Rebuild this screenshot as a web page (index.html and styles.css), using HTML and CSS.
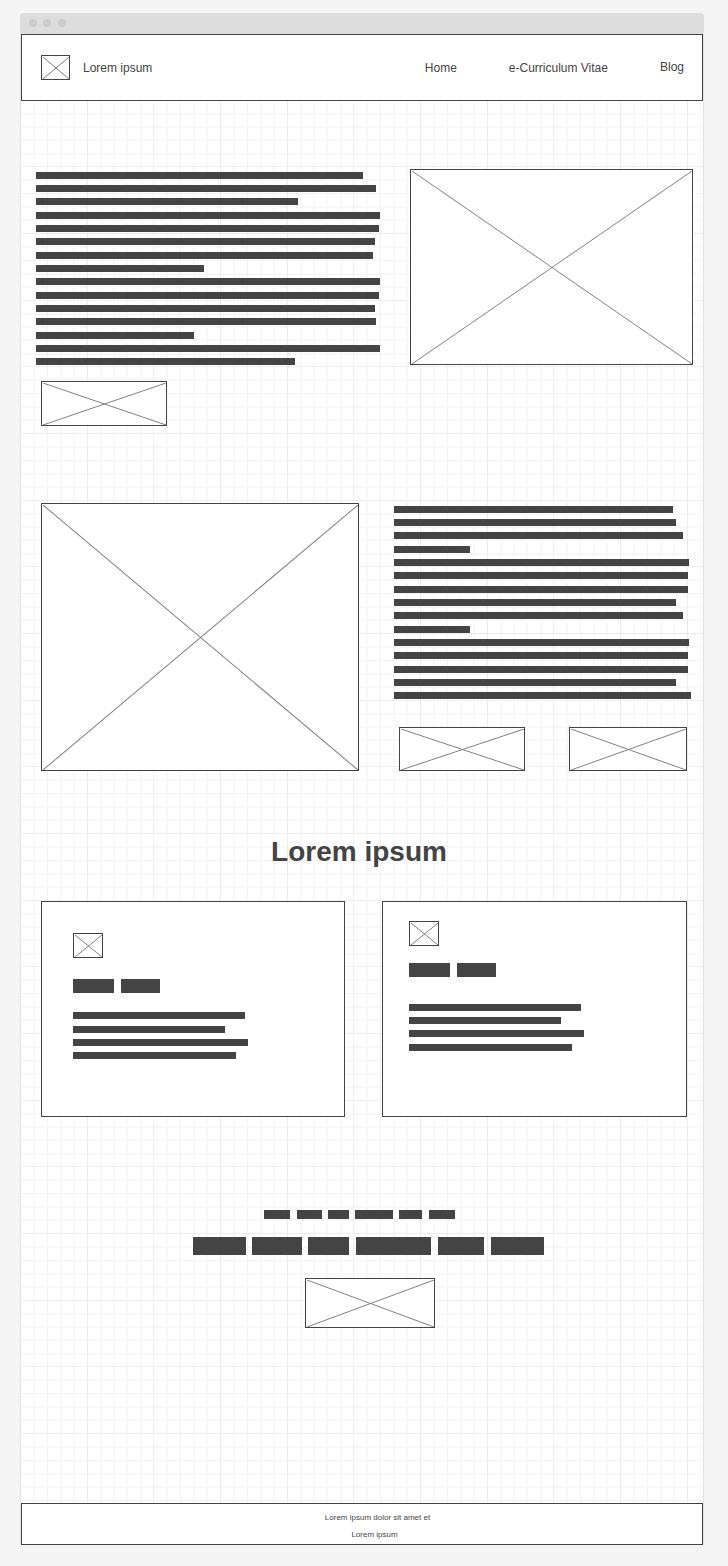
FILE: index.html
```html
<!DOCTYPE html>
<html lang="en">
<head>
<meta charset="utf-8">
<meta name="viewport" content="width=device-width, initial-scale=1">
<title>Lorem ipsum</title>
<link rel="stylesheet" href="styles.css">
</head>
<body>
<svg class="defs" aria-hidden="true">
  <symbol id="cross" viewBox="0 0 100 100" preserveAspectRatio="none">
    <path d="M0 0L100 100M100 0L0 100" vector-effect="non-scaling-stroke"/>
  </symbol>
</svg>
<div class="window">
  <div class="titlebar"><span class="dot"></span><span class="dot"></span><span class="dot"></span></div>
  <div class="page">
    <header class="header">
      <span class="box logo"><svg class="cross"><use href="#cross"/></svg></span>
      <span class="brand">Lorem ipsum</span>
      <nav class="nav">
        <a href="#">Home</a>
        <a href="#">e-Curriculum Vitae</a>
        <a href="#" class="raised">Blog</a>
      </nav>
    </header>
    <main class="main">
      <section class="intro">
        <div class="copy">
          <div class="lines">
            <div style="width:327px"></div><div style="width:340px"></div><div style="width:262px"></div>
            <div style="width:344px"></div><div style="width:343px"></div><div style="width:339px"></div>
            <div style="width:337px"></div><div style="width:168px"></div><div style="width:344px"></div>
            <div style="width:343px"></div><div style="width:339px"></div><div style="width:340px"></div>
            <div style="width:158px"></div><div style="width:344px"></div><div style="width:259px"></div>
          </div>
          <button type="button" class="box intro-button" aria-label="Action"><svg class="cross"><use href="#cross"/></svg></button>
        </div>
        <div class="box intro-image"><svg class="cross"><use href="#cross"/></svg></div>
      </section>
      <section class="about">
        <div class="box about-image"><svg class="cross"><use href="#cross"/></svg></div>
        <div class="copy">
          <div class="lines">
            <div style="width:279px"></div><div style="width:282px"></div><div style="width:289px"></div>
            <div style="width:76px"></div><div style="width:295px"></div><div style="width:294px"></div>
            <div style="width:294px"></div><div style="width:282px"></div><div style="width:289px"></div>
            <div style="width:76px"></div><div style="width:295px"></div><div style="width:294px"></div>
            <div style="width:294px"></div><div style="width:282px"></div><div style="width:297px"></div>
          </div>
          <div class="actions">
            <button type="button" class="box" aria-label="Action"><svg class="cross"><use href="#cross"/></svg></button>
            <button type="button" class="box" aria-label="Action"><svg class="cross"><use href="#cross"/></svg></button>
          </div>
        </div>
      </section>
      <h1 class="title">Lorem ipsum</h1>
      <section class="cards">
        <article class="card">
          <div class="box card-icon"><svg class="cross"><use href="#cross"/></svg></div>
          <div class="card-title"><span style="width:41px"></span><span style="width:39px"></span></div>
          <div class="lines">
            <div style="width:172px"></div><div class="loose" style="width:152px"></div><div style="width:175px"></div><div class="tight" style="width:163px"></div>
          </div>
        </article>
        <article class="card card-compact">
          <div class="box card-icon"><svg class="cross"><use href="#cross"/></svg></div>
          <div class="card-title"><span style="width:41px"></span><span style="width:39px"></span></div>
          <div class="lines">
            <div style="width:172px"></div><div style="width:152px"></div><div style="width:175px"></div><div style="width:163px"></div>
          </div>
        </article>
      </section>
      <section class="contact">
        <div class="words words-small">
          <span style="width:26px"></span><span class="apart" style="width:25px"></span><span style="width:21px"></span><span style="width:38px"></span><span style="width:23px"></span><span class="apart" style="width:26px"></span>
        </div>
        <div class="words words-large">
          <span style="width:53px"></span><span style="width:50px"></span><span style="width:41px"></span><span class="apart" style="width:75px"></span><span class="apart" style="width:46px"></span><span class="apart" style="width:53px"></span>
        </div>
        <div class="contact-action">
          <button type="button" class="box contact-button" aria-label="Action"><svg class="cross"><use href="#cross"/></svg></button>
        </div>
      </section>
    </main>
    <footer class="footer">
      <p>Lorem ipsum dolor sit amet et</p>
      <p class="footer-name">Lorem ipsum</p>
    </footer>
  </div>
</div>
</body>
</html>
```
FILE: styles.css
```css
* { box-sizing: border-box; }

body {
  margin: 0;
  padding: 13px 24px 21px 20px;
  background: #f4f4f4;
  color: #444;
  font: 12px/16px "Liberation Sans", Arial, sans-serif;
}

.defs { display: none; }

/* Window frame */
.titlebar {
  display: flex;
  align-items: center;
  gap: 6px;
  height: 21px;
  padding: 0 9px 1px;
  border-radius: 4px 4px 0 0;
  background: #ddd;
}
.dot { width: 8px; height: 8px; border-radius: 50%; background: #cbcbcb; }
.dot:last-child { margin-left: 1px; }

.page {
  border: solid #e2e2e2;
  border-width: 0 1px;
  background: #fff;
}

/* Graph paper: a 200px tile holding three major squares of five cells */
.main {
  background-color: #fff;
  background-position: -1px -68px;
  background-image: url("data:image/svg+xml,%3Csvg xmlns='http://www.w3.org/2000/svg' width='200' height='200' shape-rendering='crispEdges'%3E%3Cpath fill='%23f8f8f8' d='M13 0h2v200h-2zM40 0h2v200h-2zM53 0h2v200h-2zM80 0h2v200h-2zM93 0h2v200h-2zM106 0h2v200h-2zM120 0h2v200h-2zM146 0h2v200h-2zM173 0h2v200h-2zM186 0h2v200h-2zM0 13h200v2h-200zM0 40h200v2h-200zM0 53h200v2h-200zM0 80h200v2h-200zM0 93h200v2h-200zM0 106h200v2h-200zM0 120h200v2h-200zM0 146h200v2h-200zM0 173h200v2h-200zM0 186h200v2h-200z'/%3E%3Cpath fill='%23f2f2f2' d='M27 0h1v200h-1zM160 0h1v200h-1zM0 27h200v1h-200zM0 160h200v1h-200z'/%3E%3Cpath fill='%23efefef' d='M133 0h1v200h-1zM0 67h200v1h-200zM0 133h200v1h-200z'/%3E%3Cpath fill='%23ebebeb' d='M0 0h1v200h-1zM67 0h1v200h-1zM0 0h200v1h-200z'/%3E%3C/svg%3E");
}

/* Crossed placeholder boxes */
.box {
  display: block;
  padding: 1px 0 0 1px;
  border: 1px solid #444;
  border-radius: 0;
  background: #fff;
}
.cross {
  display: block;
  width: 100%;
  height: 100%;
  fill: none;
  stroke: #808080;
  stroke-width: 1px;
}

/* Header */
.header {
  display: flex;
  align-items: center;
  min-height: 67px;
  padding: 0 18px 0 19px;
  border: 1px solid #444;
  background: #fff;
}
.logo { width: 29px; height: 25px; }
.brand { margin-left: 13px; }
.nav { display: flex; gap: 52px; margin-left: auto; }
.nav a { color: inherit; text-decoration: none; }
.nav .raised { margin-top: -1px; }

/* Redacted text */
.lines div {
  max-width: 100%;
  height: 7px;
  margin-top: 6px;
  background: #444;
}
.lines div:nth-child(3n + 1) { margin-top: 7px; }
.lines div:first-child { margin-top: 0; }
.lines .loose { margin-top: 7px; }
.lines .tight:nth-child(4) { margin-top: 6px; }

.copy { padding-top: 3px; }

.intro {
  display: grid;
  grid-template-columns: 344fr 283fr;
  gap: 30px;
  align-items: start;
  padding: 68px 10px 0 15px;
}
.intro-image { aspect-ratio: 283 / 196; }
.intro-button { width: 126px; height: 45px; margin: 16px 0 0 5px; }

.about {
  display: grid;
  grid-template-columns: 318fr 297fr;
  gap: 35px;
  align-items: start;
  padding: 77px 12px 0 20px;
}
.about-image { aspect-ratio: 318 / 268; }
.actions {
  display: grid;
  grid-template-columns: 126fr 118fr;
  gap: 44px;
  padding: 28px 4px 0 5px;
}
.actions .box { height: 44px; }

.title {
  margin: 65px 0 33px;
  padding-right: 6px;
  font-size: 28px;
  line-height: 32px;
  text-align: center;
}

/* Cards */
.cards {
  display: grid;
  grid-template-columns: 304fr 305fr;
  gap: 37px;
  padding: 0 16px 0 20px;
}
.card {
  min-height: 216px;
  padding: 31px;
  border: 1px solid #444;
  background: #fff;
}
.card-icon { width: 30px; height: 25px; }
.card-title { display: flex; gap: 7px; margin: 21px 0 19px; }
.card-title span { height: 14px; background: #444; }
.card-compact { padding: 19px 26px; }
.card-compact .card-title { margin: 17px 0 27px; }

/* Contact */
.contact { padding: 93px 0 175px; }
.words { display: flex; justify-content: center; }
.words span { background: #444; }
.words span + span { margin-left: 6px; }
.words span + .apart { margin-left: 7px; }
.words-small { padding-right: 5px; }
.words-small span { height: 9px; }
.words-large { margin-top: 18px; padding-left: 13px; }
.words-large span { height: 18px; }
.contact-action { display: flex; justify-content: center; margin-top: 23px; padding-left: 16px; }
.contact-button { width: 130px; height: 50px; }

/* Footer */
.footer {
  padding: 5px 0 1px 31px;
  border: 1px solid #444;
  background: #fff;
  font-size: 8px;
  line-height: 17px;
  text-align: center;
}
.footer p { margin: 0; }
.footer .footer-name { padding-right: 6px; }
```
